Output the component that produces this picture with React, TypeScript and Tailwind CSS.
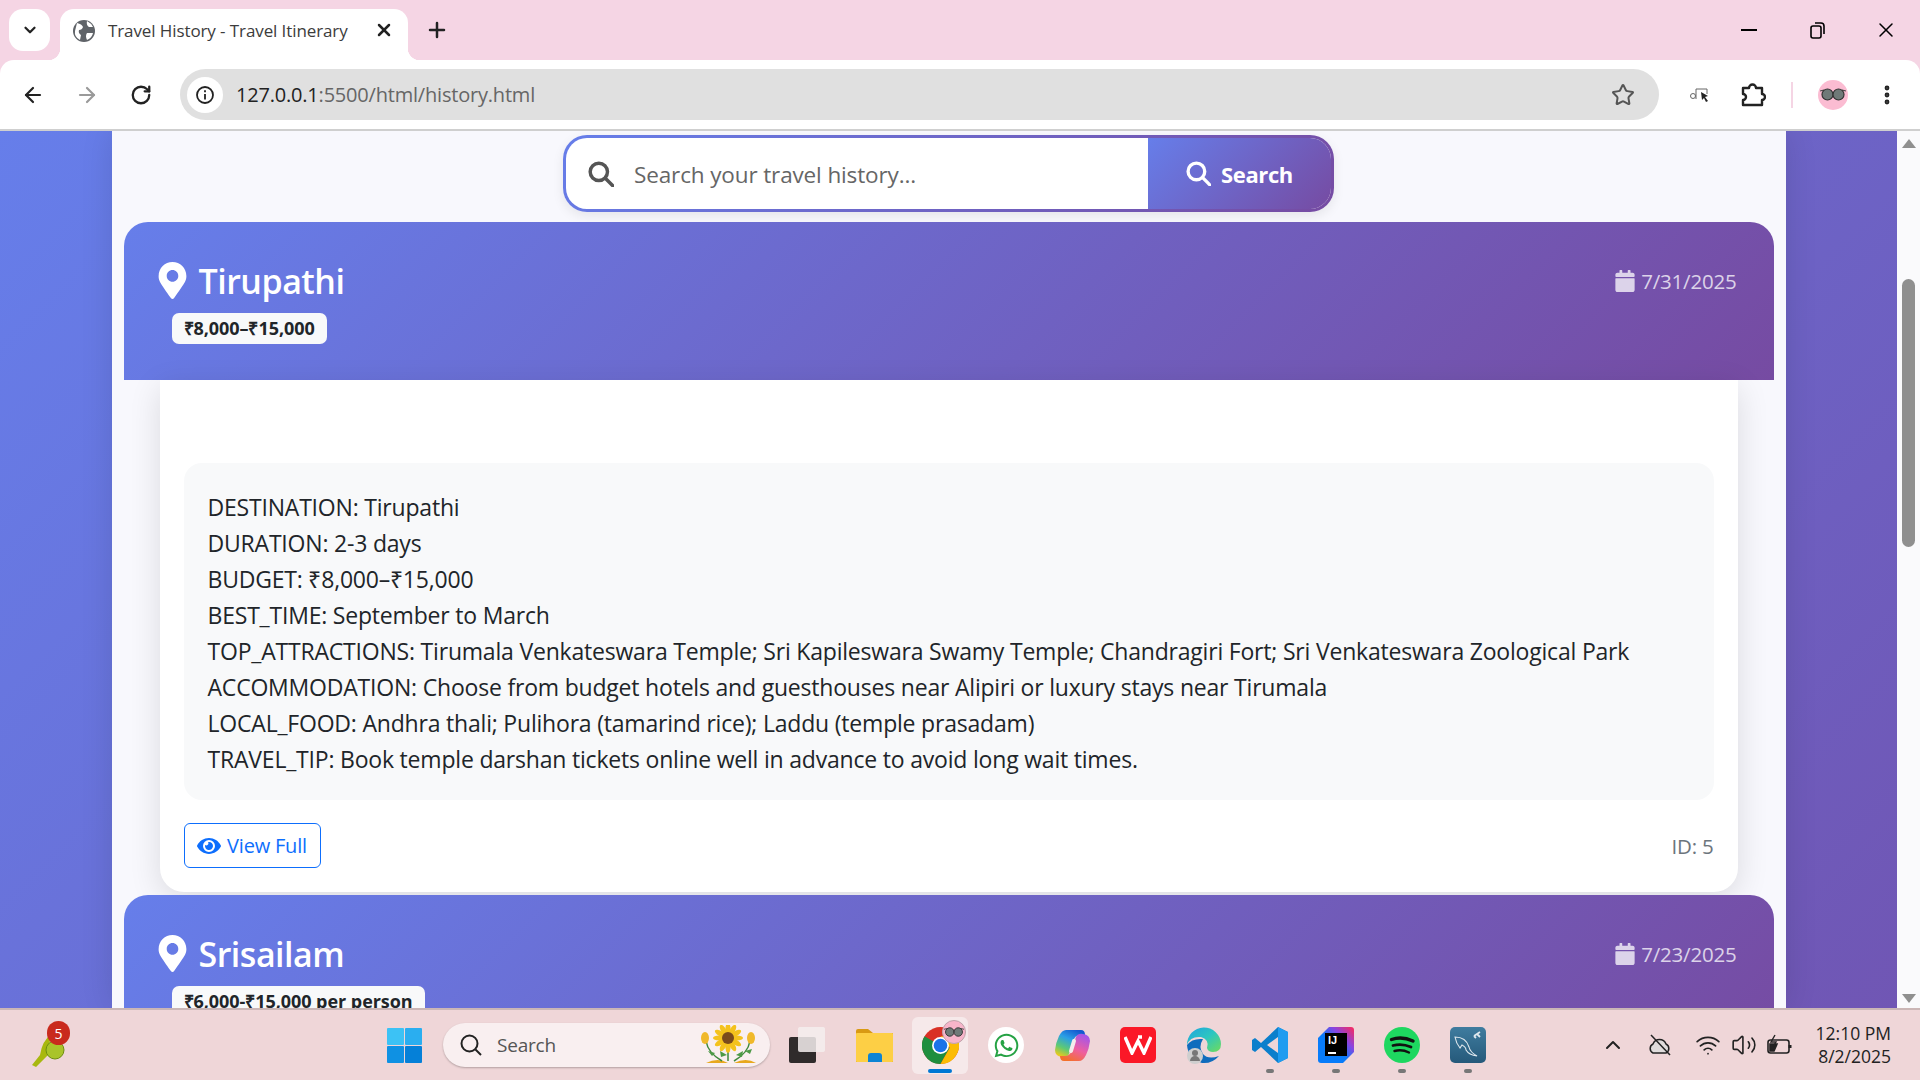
import React from "react";
import { ArrowLeft, ArrowRight, ChevronDown, ChevronUp, EllipsisVertical, Plus, RotateCw, Star, Volume2, Wifi, X } from "lucide-react";
import { FaCalendar, FaEye, FaMapMarkerAlt, FaWhatsapp } from "react-icons/fa";

const uiFont = "font-['Open_Sans',sans-serif]";

function Glasses({ size = 26 }: { size?: number }) {
  return (
    <svg width={size} height={size * 0.5} viewBox="0 0 26 13">
      <path d="M0 3 L4 2 M22 2 L26 3" stroke="#444" strokeWidth="1.2" />
      <circle cx="7.5" cy="6.5" r="5.5" fill="#6f7a78" stroke="#333" strokeWidth="1.2" />
      <circle cx="18.5" cy="6.5" r="5.5" fill="#6f7a78" stroke="#333" strokeWidth="1.2" />
      <path d="M12 5 q1 -1 2 0" stroke="#333" fill="none" />
    </svg>
  );
}

function SearchGlyph({ size, className }: { size: number; className?: string }) {
  return (
    <svg width={size} height={size} viewBox="0 0 24 24" fill="none" stroke="currentColor" strokeWidth="3.2" className={className}>
      <circle cx="10" cy="10" r="8" />
      <path d="M16 16 L23 23" strokeLinecap="round" />
    </svg>
  );
}

function ChromeBar() {
  return (
    <header className={`bg-[#f5d5e4] ${uiFont}`}>
      <div className="flex h-[60px] items-start pt-[9px] pl-[9px]">
        <div className="flex h-[42px] w-[41px] items-center justify-center rounded-[14px] bg-white">
          <ChevronDown size={18} strokeWidth={3} className="text-[#222]" />
        </div>
        <div className="relative ml-[10px] flex h-[51px] w-[348px] items-center rounded-t-[14px] bg-white pb-[7px] pl-[13px]">
          <div className="absolute bottom-0 -left-[12px] h-[12px] w-[12px] bg-[radial-gradient(circle_at_0_0,#f5d5e4_12px,#ffffff_12.5px)]" />
          <div className="absolute -right-[12px] bottom-0 h-[12px] w-[12px] bg-[radial-gradient(circle_at_100%_0,#f5d5e4_12px,#ffffff_12.5px)]" />
          <svg width="22" height="22" viewBox="0 0 22 22">
            <circle cx="11" cy="11" r="11" fill="#5f6368" />
            <path d="M4 3 q5 1 6 4 q-1 3 -4 3 q-1 3 2 5 l-1 5 q-6 -3 -5 -9 z M14 1 q4 2 6 6 l-4 0 q-3 -2 -2 -6 z M14 13 l6 0 q-1 5 -6 7 q-2 -4 0 -7 z" fill="#ffffff" />
          </svg>
          <span className="ml-[13px] text-[17px] tracking-[-0.1px] whitespace-nowrap text-[#3c3c3c]">Travel History - Travel Itinerary</span>
          <X size={20} strokeWidth={3} className="absolute top-[11px] right-[14px] text-[#222]" />
        </div>
        <Plus size={24} strokeWidth={2.5} className="mt-[9px] ml-[17px] text-[#222]" />
        <div className="ml-auto flex h-[42px] items-center">
          <div className="h-[2px] w-[16px] bg-black" />
          <svg width="18" height="18" viewBox="0 0 18 18" fill="none" stroke="#000" strokeWidth="1.6" className="ml-[52px]">
            <rect x="2" y="5" width="10" height="12" rx="2" />
            <path d="M6 2 h6 a3 3 0 0 1 3 3 v8" />
          </svg>
          <X size={24} strokeWidth={1.5} className="mr-[22px] ml-[47px] text-black" />
        </div>
      </div>
      <div className="flex h-[71px] items-center rounded-t-[14px] border-b-2 border-[#cfcfcf] bg-white pl-[21px]">
        <ArrowLeft size={24} strokeWidth={2.2} className="text-[#222]" />
        <ArrowRight size={24} strokeWidth={2.2} className="ml-[30px] text-[#9a9a9a]" />
        <RotateCw size={22} strokeWidth={2.5} className="ml-[31px] text-[#222]" />
        <div className="ml-[28px] flex h-[51px] w-[1479px] items-center rounded-full bg-[#e0e0e0] pl-[7px]">
          <div className="flex h-[36px] w-[36px] items-center justify-center rounded-full bg-white">
            <svg width="20" height="20" viewBox="0 0 20 20" fill="none" stroke="#222" strokeWidth="1.8">
              <circle cx="10" cy="10" r="8" />
              <path d="M10 9 v5.5 M10 5.2 v2" />
            </svg>
          </div>
          <span className="ml-[13px] text-[20px] tracking-[-0.2px] text-[#666]">
            <span className="text-[#222]">127.0.0.1</span>:5500/html/history.html
          </span>
          <Star size={24} strokeWidth={2} className="mr-[24px] ml-auto text-[#555]" />
        </div>
        <svg width="20" height="16" viewBox="0 0 20 16" fill="none" className="ml-[31px]" stroke="#666" strokeWidth="1">
          <circle cx="3" cy="9" r="2.5" />
          <path d="M6 12 V2 h11 v5" />
          <path d="M11 5 l7 4 -3 1 3 4 -2 1 -2 -4 -2 2 z" fill="#222" stroke="none" />
        </svg>
        <svg width="26" height="26" viewBox="0 0 26 26" fill="none" stroke="#222" strokeWidth="2.4" className="ml-[30px]">
          <path d="M3 6 h6 a3.5 3.5 0 0 1 7 0 h6 v6 a3 3 0 0 1 0 6 v5 h-19 v-5 a3 3 0 0 0 0 -6 z" strokeLinejoin="round" />
        </svg>
        <div className="ml-[25px] h-[26px] w-[2px] bg-[#f5d5e4]" />
        <div className="ml-[25px] flex h-[30px] w-[30px] items-center justify-center rounded-full bg-[#fbbcd2]">
          <Glasses />
        </div>
        <EllipsisVertical size={24} strokeWidth={2.8} className="ml-[27px] text-[#222]" />
      </div>
    </header>
  );
}

type TripProps = {
  city: string;
  budget: string;
  date: string;
};

function TripHeader({ city, budget, date }: TripProps) {
  return (
    <div className="flex h-[158px] shrink-0 items-start justify-between rounded-t-[24px] bg-[linear-gradient(135deg,#667eea,#764ba2)] pr-[37px] pl-[35px] text-white">
      <div className="pt-[40px]">
        <div className="flex h-[37px] items-center">
          <FaMapMarkerAlt size={37} className="-ml-[5px] text-white" />
          <h2 className="ml-[8px] text-[34px] leading-none font-semibold tracking-[-0.5px]">{city}</h2>
        </div>
        <span className="mt-[14px] ml-[13px] flex h-[31px] w-fit items-center rounded-[7px] bg-[#f8f9fa] px-[12px] text-[18px] font-bold tracking-[-0.05px] text-[#212529]">
          {budget}
        </span>
      </div>
      <div className="mt-[47px] flex items-center text-[20.5px] leading-[24px] tracking-[-0.2px] text-white/75">
        <FaCalendar size={22} className="mr-[5px]" />
        {date}
      </div>
    </div>
  );
}

const itinerary = [
  "DESTINATION: Tirupathi",
  "DURATION: 2-3 days",
  "BUDGET: ₹8,000–₹15,000",
  "BEST_TIME: September to March",
  "TOP_ATTRACTIONS: Tirumala Venkateswara Temple; Sri Kapileswara Swamy Temple; Chandragiri Fort; Sri Venkateswara Zoological Park",
  "ACCOMMODATION: Choose from budget hotels and guesthouses near Alipiri or luxury stays near Tirumala",
  "LOCAL_FOOD: Andhra thali; Pulihora (tamarind rice); Laddu (temple prasadam)",
  "TRAVEL_TIP: Book temple darshan tickets online well in advance to avoid long wait times.",
];

function PageContent() {
  return (
    <main className={`flex min-h-0 min-w-0 flex-1 overflow-hidden bg-[#fafafc] ${uiFont}`}>
      <div className="min-w-0 flex-1 overflow-hidden bg-[linear-gradient(135deg,#667eea,#7056b4)]">
        <div className="mx-auto h-full w-[1674px] overflow-hidden bg-[#f8f8fd] px-[12px] shadow-[0_0_30px_rgba(0,0,0,0.12)]">
          <div className="mx-auto mt-[4px] h-[77px] w-[771px] rounded-[24px] bg-[linear-gradient(135deg,#667eea,#764ba2)] p-[3px] shadow-[0_4px_12px_rgba(0,0,0,0.08)]">
            <div className="flex h-full overflow-hidden rounded-[21px] bg-white">
              <div className="flex flex-1 items-center pl-[22px]">
                <SearchGlyph size={26} className="text-[#555]" />
                <span className="mt-[2px] ml-[20px] text-[22.5px] tracking-[-0.13px] text-[#666]">Search your travel history...</span>
              </div>
              <div className="flex w-[183px] items-center justify-center bg-[linear-gradient(135deg,#667eea,#764ba2)] text-white">
                <SearchGlyph size={25} />
                <span className="mt-[2px] ml-[10px] text-[22px] font-bold tracking-[-0.4px]">Search</span>
              </div>
            </div>
          </div>
          <div className="mt-[10px]">
            <TripHeader city="Tirupathi" budget="₹8,000–₹15,000" date="7/31/2025" />
            <div className="mx-[36px] mb-[3px] rounded-b-[24px] bg-white px-[24px] pt-[83px] pb-[24px] shadow-[0_8px_32px_rgba(0,0,0,0.12)]">
              <div className="rounded-[18px] bg-[#f8f9fa] px-[24px] pt-[26px] pb-[23px] text-[23px] leading-[36px] tracking-[-0.2px] whitespace-nowrap text-[#212529]">
                {itinerary.map((line) => (
                  <div key={line}>{line}</div>
                ))}
              </div>
              <div className="mt-[23px] flex items-center justify-between">
                <div className="flex h-[45px] w-[137px] items-center justify-center rounded-[6px] border border-[#0d6efd] text-[20px] tracking-[-0.2px] text-[#0d6efd]">
                  <FaEye size={24} className="mr-[6px]" />
                  View Full
                </div>
                <span className="mt-[2px] text-[20.5px] tracking-[-0.2px] text-[#6c757d]">ID: 5</span>
              </div>
            </div>
            <TripHeader city="Srisailam" budget="₹6,000-₹15,000 per person" date="7/23/2025" />
          </div>
        </div>
      </div>
      <div className="flex w-[23px] shrink-0 flex-col items-center">
        <div className="mt-[8px] h-0 w-0 border-x-[7px] border-b-[9px] border-x-transparent border-b-[#8f8f8f]" />
        <div className="mt-[131px] h-[268px] w-[13px] rounded-full bg-[#8f8f8f]" />
        <div className="mt-auto mb-[5px] h-0 w-0 border-x-[7px] border-t-[9px] border-x-transparent border-t-[#8f8f8f]" />
      </div>
    </main>
  );
}

function Sunflower() {
  return (
    <svg width="62" height="40" viewBox="0 0 62 40">
      <path d="M8 38 q12 -6 22 0 z M36 38 q12 -6 22 0 z" fill="#e7a91f" />
      <path d="M30 14 V36 M8 16 Q10 28 24 36 M52 16 Q50 28 36 36" stroke="#3f8a3c" strokeWidth="1.5" fill="none" />
      <path d="M10 26 l7 2 -3 3 z M47 26 l7 -2 -2 5 z M22 26 l7 4 -6 2 z M38 30 l7 -4 -1 6 z" fill="#4d9a47" />
      <g fill="#f4c21d">
        {[0, 30, 60, 90, 120, 150, 180, 210, 240, 270, 300, 330].map((a) => (
          <ellipse key={a} cx="30" cy="4" rx="2.6" ry="6" transform={`rotate(${a} 30 13)`} />
        ))}
      </g>
      <circle cx="30" cy="13" r="6" fill="#7a4a1c" />
      <ellipse cx="7" cy="13" rx="4" ry="6" fill="#f0b92a" />
      <ellipse cx="53" cy="13" rx="4" ry="6" fill="#f0b92a" />
    </svg>
  );
}

function AppSlot({ children, dot, active }: { children: React.ReactNode; dot?: boolean; active?: boolean }) {
  return (
    <div className={`relative flex h-[57px] w-[56px] items-center justify-center rounded-[6px] ${active ? "bg-[#f6e9ea]" : ""}`}>
      {children}
      {dot && <div className="absolute bottom-[1px] h-[4px] w-[8px] rounded-full bg-[#777]" />}
      {active && <div className="absolute bottom-[1px] h-[4px] w-[24px] rounded-full bg-[#0078d4]" />}
    </div>
  );
}

function Taskbar() {
  return (
    <footer className={`flex h-[72px] shrink-0 items-center border-t-2 border-[#cbb6b6] bg-[#efd6d8] ${uiFont}`}>
      <div className="relative ml-[30px] h-[44px] w-[42px]">
        <svg width="38" height="36" viewBox="0 0 38 36" className="mt-[8px]">
          <path d="M2 34 L10 24 Q12 10 22 2 Q18 16 18 24 L6 36 Z" fill="#a8b80f" />
          <circle cx="25" cy="19" r="9" fill="#a9c42a" stroke="#6d8d10" />
        </svg>
        <div className="absolute top-[-2px] left-[17px] flex h-[24px] w-[23px] items-center justify-center rounded-full bg-[#c92a1d] text-[14px] text-white">5</div>
      </div>
      <svg width="35" height="35" viewBox="0 0 35 35" className="ml-[315px]">
        <rect x="0" y="0" width="17" height="17" rx="1" fill="#3cc2f5" />
        <rect x="18" y="0" width="17" height="17" rx="1" fill="#2aaef0" />
        <rect x="0" y="18" width="17" height="17" rx="1" fill="#0f91e3" />
        <rect x="18" y="18" width="17" height="17" rx="1" fill="#0580d8" />
      </svg>
      <div className="ml-[21px] flex h-[44px] w-[327px] items-center rounded-full bg-[#f9eff0] pl-[16px] shadow-[0_1px_2px_rgba(0,0,0,0.25)]">
        <svg width="24" height="24" viewBox="0 0 24 24" fill="none" stroke="#222" strokeWidth="2">
          <circle cx="10.5" cy="10.5" r="8" />
          <path d="M16.5 16.5 L22 22" />
        </svg>
        <span className="ml-[14px] text-[19px] tracking-[-0.2px] text-[#555]">Search</span>
        <div className="mr-[10px] ml-auto">
          <Sunflower />
        </div>
      </div>
      <div className="ml-[10px] flex items-center gap-[10px]">
        <AppSlot>
          <svg width="38" height="36" viewBox="0 0 38 36">
            <rect x="0" y="10" width="27" height="26" rx="2" fill="#2f2b2b" />
            <rect x="9" y="0" width="27" height="25" rx="2" fill="#f5eeee" fillOpacity="0.85" />
          </svg>
        </AppSlot>
        <AppSlot>
          <svg width="37" height="34" viewBox="0 0 37 34">
            <path d="M0 3 a2 2 0 0 1 2 -2 h10 l5 4 h20 v29 h-37 z" fill="#d99a13" />
            <rect x="0" y="5" width="37" height="29" rx="1" fill="#fdcf45" />
            <path d="M12 34 v-6 a3 3 0 0 1 3 -3 h8 a3 3 0 0 1 3 3 v6 z" fill="#0d84d4" />
          </svg>
        </AppSlot>
        <AppSlot active>
          <svg width="37" height="37" viewBox="0 0 48 48">
            <circle cx="24" cy="24" r="24" fill="#d93025" />
            <path d="M24 24 L3.2 12 A24 24 0 0 0 24 48 L36 27 Z" fill="#1e8e3e" />
            <path d="M24 12 H44.8 A24 24 0 0 1 24 48 L36 27 Z" fill="#fbbc04" />
            <circle cx="24" cy="24" r="11" fill="#fff" />
            <circle cx="24" cy="24" r="8.8" fill="#1a73e8" />
          </svg>
          <div className="absolute top-[3px] right-[2px] flex h-[24px] w-[24px] items-center justify-center rounded-full border border-[#bfa3aa] bg-[#f7b5ca]">
            <Glasses size={20} />
          </div>
        </AppSlot>
        <AppSlot>
          <div className="flex h-[36px] w-[36px] items-center justify-center rounded-full bg-white">
            <FaWhatsapp size={27} className="text-[#25a244]" />
          </div>
        </AppSlot>
        <AppSlot>
          <svg width="35" height="33" viewBox="0 0 35 33">
            <defs>
              <linearGradient id="cpA" x1="0.7" y1="0" x2="0.2" y2="1">
                <stop offset="0" stopColor="#1459d0" />
                <stop offset="0.35" stopColor="#2a9fe6" />
                <stop offset="0.7" stopColor="#5fca72" />
                <stop offset="1" stopColor="#f6c915" />
              </linearGradient>
              <linearGradient id="cpB" x1="0.8" y1="0" x2="0.3" y2="1">
                <stop offset="0" stopColor="#9f55ee" />
                <stop offset="0.55" stopColor="#ee5fa0" />
                <stop offset="1" stopColor="#f4702a" />
              </linearGradient>
            </defs>
            <path d="M11 1 H26 Q30 1 30 6 H25 Q20 6 18 12 L14 25 Q12 29 7 28 Q0 27 0 21 Q1 13 4 7 Q7 1 11 1 Z" fill="url(#cpA)" />
            <path d="M24 32 H9 Q5 32 5 27 H10 Q15 27 17 21 L21 8 Q23 4 28 5 Q35 6 35 12 Q34 20 31 26 Q28 32 24 32 Z" fill="url(#cpB)" />
            <path d="M19 12 L16 22" stroke="#f4ecec" strokeWidth="4" strokeLinecap="round" />
          </svg>
        </AppSlot>
        <AppSlot>
          <div className="flex h-[36px] w-[36px] items-center justify-center rounded-[5px] bg-[#fb1827]">
            <svg width="28" height="20" viewBox="0 0 28 20" fill="none" stroke="#fff" strokeWidth="3.4">
              <path d="M1 2 L8 18 L14 6 L20 18 L27 2 M14 2 L18 2" />
            </svg>
          </div>
        </AppSlot>
        <AppSlot>
          <svg width="36" height="37" viewBox="0 0 36 37">
            <defs>
              <linearGradient id="edA" x1="0" y1="0" x2="1" y2="1">
                <stop offset="0" stopColor="#1fa4e0" />
                <stop offset="0.5" stopColor="#2dc6c0" />
                <stop offset="1" stopColor="#6fdc5a" />
              </linearGradient>
            </defs>
            <path d="M1 18 A17 17 0 0 1 35 17 Q35 25 27 25 Q22 25 21 21 Q24 13 15 10 Q4 9 1 18 Z" fill="url(#edA)" />
            <path d="M1 18 Q2 32 16 36 Q26 37 33 29 Q22 33 17 27 Q12 20 17 12 Q6 11 1 18 Z" fill="#0f6cbd" />
            <circle cx="9" cy="29" r="8" fill="#cfcfcf" />
            <circle cx="9" cy="26" r="3" fill="#777" />
            <path d="M4 34 a5 5 0 0 1 10 0 z" fill="#777" />
          </svg>
        </AppSlot>
        <AppSlot dot>
          <svg width="36" height="36" viewBox="0 0 36 36">
            <path d="M26 0 L36 5 V31 L26 36 L9 20 L3 25 L0 23 V13 L3 11 L9 16 Z M26 10 L15 18 L26 26 Z" fill="#0b7fcc" fillRule="evenodd" />
            <path d="M26 0 L36 5 V31 L26 36 Z M26 10 L26 26 L26 26 Z" fill="#1f9cf0" />
          </svg>
        </AppSlot>
        <AppSlot dot>
          <div className="relative h-[36px] w-[36px]">
            <svg width="36" height="36" viewBox="0 0 36 36">
              <defs>
                <linearGradient id="ijA" x1="1" y1="0" x2="0" y2="1">
                  <stop offset="0" stopColor="#fe2857" />
                  <stop offset="0.3" stopColor="#8a44e0" />
                  <stop offset="0.55" stopColor="#087cfa" />
                </linearGradient>
              </defs>
              <path d="M11 0 H33 a3 3 0 0 1 3 3 V25 L25 36 H3 a3 3 0 0 1 -3 -3 V11 Z" fill="url(#ijA)" />
            </svg>
            <div className="absolute top-[6px] left-[7px] flex h-[23px] w-[22px] flex-col justify-between bg-black px-[3px] py-[2px] font-['Liberation_Sans',sans-serif] text-[11px] leading-none font-bold text-white">
              <span>IJ</span>
              <div className="h-[2px] w-[8px] bg-white" />
            </div>
          </div>
        </AppSlot>
        <AppSlot dot>
          <svg width="36" height="36" viewBox="0 0 36 36" fill="none" stroke="#111" strokeLinecap="round">
            <circle cx="18" cy="18" r="18" fill="#1ed760" stroke="none" />
            <path d="M7.5 12.5 Q18 9 29 14" strokeWidth="3.4" />
            <path d="M9 18.5 Q18 16 27 20" strokeWidth="2.8" />
            <path d="M10.5 24 Q18 22 25 25.5" strokeWidth="2.4" />
          </svg>
        </AppSlot>
        <AppSlot dot>
          <div className="flex h-[36px] w-[36px] items-center justify-center rounded-[5px] bg-[linear-gradient(180deg,#3f7c9f,#25597a)]">
            <svg width="32" height="32" viewBox="0 0 32 32" fill="none" stroke="#dfe8ee" strokeWidth="1.1">
              <path d="M3 8 q11 0 14 10 q1 5 8 9 q-8 -1 -11 -6 q0 -3 -4 -5 l-2 3 q-4 -5 -5 -11 z" />
              <path d="M22 7 l6 -4 M25 5 l3 3 M22 7 l2 2" strokeWidth="1.8" />
            </svg>
          </div>
        </AppSlot>
      </div>
      <div className="ml-[105px] flex items-center text-[#222]">
        <ChevronUp size={24} strokeWidth={2} />
        <svg width="26" height="22" viewBox="0 0 26 22" fill="none" stroke="#222" strokeWidth="1.5" className="ml-[22px]">
          <path d="M6 19 a5 5 0 0 1 0 -9 a7 7 0 0 1 13 0 a5 5 0 0 1 0 9 z" fill="#e0dcdc" />
          <path d="M4 1 L23 21" />
        </svg>
        <Wifi size={26} strokeWidth={1.6} className="ml-[22px]" />
        <Volume2 size={26} strokeWidth={1.5} className="ml-[10px]" />
        <svg width="26" height="22" viewBox="0 0 26 22" fill="none" stroke="#222" strokeWidth="1.6" className="ml-[10px]">
          <rect x="1" y="6" width="21" height="13" rx="2.5" />
          <path d="M3 17 V10 h7 l-3 7 z" fill="#222" />
          <path d="M23 11 v3" strokeWidth="3" />
          <path d="M8 1 L4 8 h5 l-3 5" strokeWidth="1.4" />
        </svg>
      </div>
      <div className="mr-[29px] ml-auto text-right text-[17.5px] leading-[23px] text-[#222]">
        <div>12:10 PM</div>
        <div>8/2/2025</div>
      </div>
    </footer>
  );
}

export default function App() {
  return (
    <div className="flex h-screen w-full flex-col overflow-hidden">
      <ChromeBar />
      <PageContent />
      <Taskbar />
    </div>
  );
}
